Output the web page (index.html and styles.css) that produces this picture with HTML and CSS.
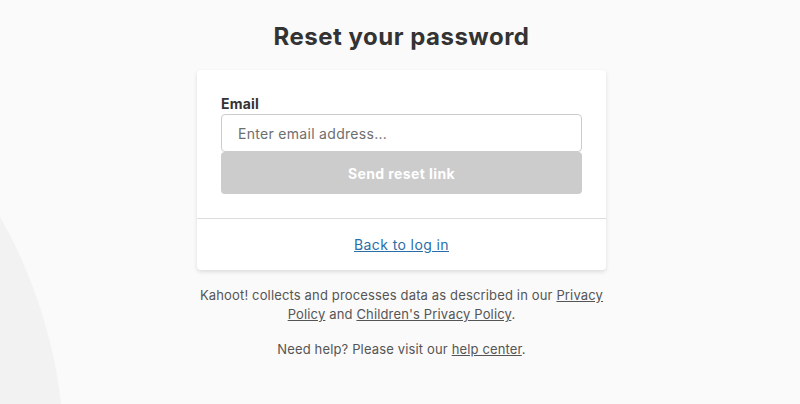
FILE: index.html
```html
<!DOCTYPE html>
<html lang="en">
<head>
<meta charset="utf-8">
<title>Reset your password</title>
<link rel="stylesheet" href="styles.css">
</head>
<body>
<main class="page">
  <h1 class="title">Reset your password</h1>
  <section class="card">
    <form class="card-body">
      <label class="label" for="email">Email</label>
      <input class="input" id="email" type="email" placeholder="Enter email address...">
      <button class="button" type="button">Send reset link</button>
    </form>
    <div class="card-footer">
      <a class="link" href="#">Back to log in</a>
    </div>
  </section>
  <p class="note">Kahoot! collects and processes data as described in our <a href="#">Privacy Policy</a> and <a href="#">Children's Privacy Policy</a>.</p>
  <p class="note help">Need help? Please visit our <a href="#">help center</a>.</p>
</main>
</body>
</html>
```
FILE: styles.css
```css
html, body {
  margin: 0;
  height: 100%;
}
body {
  background: radial-gradient(circle 493px at -428px 460px, #f2f2f2 99.7%, #fafafa 100%);
  background-color: #fafafa;
  font-family: Inter, "Noto Sans", sans-serif;
  color: #333;
  overflow: hidden;
}
.page {
  display: flex;
  flex-direction: column;
  align-items: center;
  padding: 22px 0 0 3px;
}
.title {
  margin: 0 0 18px;
  font-size: 24px;
  line-height: 30px;
  font-weight: 700;
  letter-spacing: 0.5px;
  color: #333;
}
.card {
  width: 409px;
  background: #fff;
  border-radius: 4px;
  box-shadow: 0 2px 4px rgba(0,0,0,0.12);
}
.card-body {
  display: flex;
  flex-direction: column;
  padding: 24px 24px 24px;
}
.label {
  font-size: 14px;
  font-weight: 700;
  line-height: 20px;
  letter-spacing: 0.2px;
  color: #333;
}
.input {
  height: 38px;
  box-sizing: border-box;
  border: 1px solid #ccc;
  border-radius: 4px;
  padding: 0 16px;
  font-family: inherit;
  font-size: 14px;
  letter-spacing: 0.3px;
  color: #333;
  background: #fff;
}
.input::placeholder {
  color: #6e6e6e;
}
.button {
  height: 42px;
  border: 0;
  border-radius: 4px;
  background: #ccc;
  color: #fff;
  font-family: inherit;
  font-size: 14px;
  font-weight: 700;
  letter-spacing: 0.4px;
}
.card-footer {
  border-top: 1px solid #ddd;
  height: 51px;
  display: flex;
  align-items: center;
  justify-content: center;
}
.link {
  color: #2a6ea8;
  font-size: 14px;
  letter-spacing: 0.4px;
  text-decoration: underline;
}
.note {
  width: 420px;
  margin: 16px 0 0;
  text-align: center;
  font-size: 13px;
  line-height: 19px;
  letter-spacing: 0.15px;
  color: #555;
}
.note a {
  color: #555;
}
.help {
  margin-top: 16px;
}
```
